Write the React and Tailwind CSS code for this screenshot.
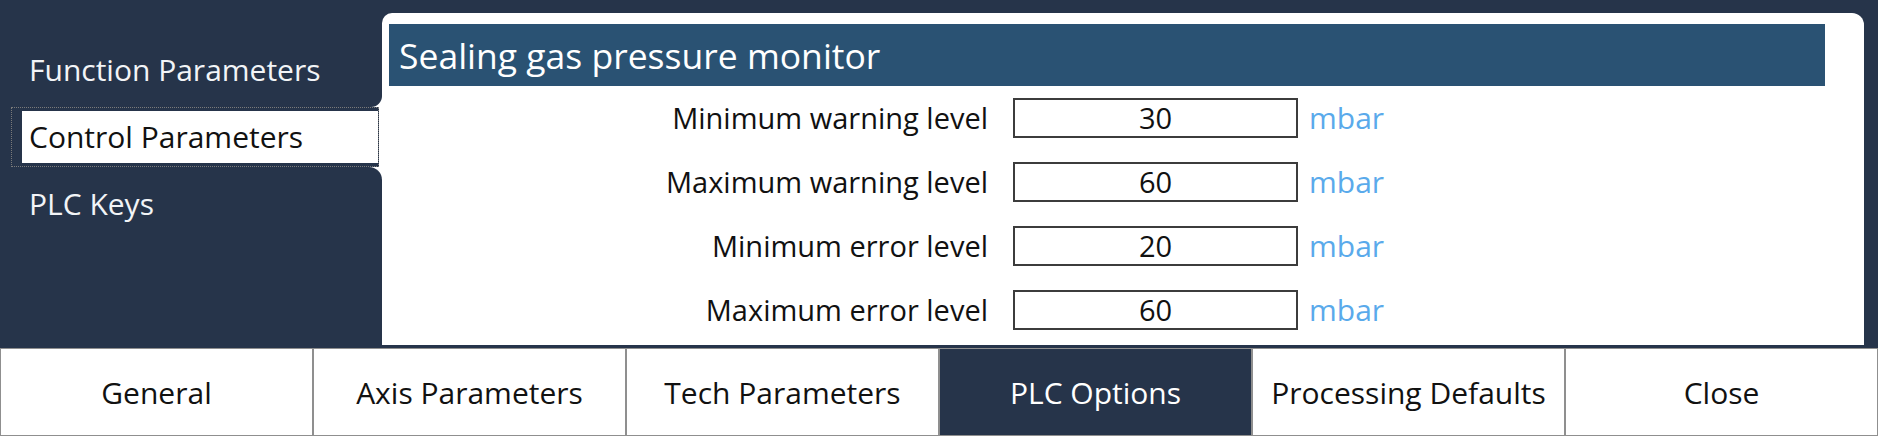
import { useState } from 'react';

const rows = [
    { label: 'Minimum warning level', value: '30' },
    { label: 'Maximum warning level', value: '60' },
    { label: 'Minimum error level', value: '20' },
    { label: 'Maximum error level', value: '60' },
];

const tabs = ['General', 'Axis Parameters', 'Tech Parameters', 'PLC Options', 'Processing Defaults', 'Close'];

export default function App() {
    const [values, setValues] = useState(rows.map(r => r.value));
    const activeTab = 'PLC Options';

    return (
        <div className="w-full h-[436px] bg-[#26344a] flex flex-col font-['Open_Sans',sans-serif] overflow-hidden">
            <div className="flex h-[348px]">
                {/* side menu */}
                <div className="w-[382px] bg-white flex flex-col">
                    <div className="h-[107px] bg-[#26344a] rounded-br-[11px] flex items-end pl-[29px] pb-[19px]">
                        <span className="text-[30px] leading-[36px] text-[#f2f4f7]">Function Parameters</span>
                    </div>
                    <div className="h-[60px] flex">
                        <div className="w-[11px] bg-[#26344a]" />
                        <div className="w-[368px] border border-dotted border-[#7a7a7a] bg-[#26344a] pl-[10px] py-[3px]">
                            <div className="h-full bg-white flex items-center pl-[7px]">
                                <span className="text-[30px] leading-[36px] text-[#111]">Control Parameters</span>
                            </div>
                        </div>
                    </div>
                    <div className="flex-1 bg-[#26344a] rounded-tr-[13px] pl-[29px] pt-[19px]">
                        <span className="text-[30px] leading-[36px] text-[#f2f4f7]">PLC Keys</span>
                    </div>
                </div>

                {/* content panel */}
                <div className="flex-1 bg-white mt-[13px] mb-[3px] mr-[14px] rounded-tl-[10px] rounded-tr-[12px] pl-[7px] pt-[11px] pr-[39px]">
                    <div className="h-[62px] bg-[#2a5273] flex items-center pl-[10px]">
                        <span className="text-[35.5px] leading-[44px] text-white">Sealing gas pressure monitor</span>
                    </div>
                    <div className="mt-[12px] flex flex-col gap-[24px]">
                        {rows.map((row, i) => (
                            <div key={row.label} className="flex items-center h-[40px]">
                                <div className="w-[599px] text-right text-[29px] leading-[36px] text-[#111]">{row.label}</div>
                                <input
                                    className="ml-[25px] w-[285px] h-[40px] border-2 border-[#3c3c3c] text-center text-[29px] text-[#111] outline-none font-['Open_Sans',sans-serif]"
                                    value={values[i]}
                                    onChange={(e) => setValues(values.map((v, j) => (j === i ? e.target.value : v)))}
                                />
                                <span className="ml-[11px] text-[30px] leading-[36px] text-[#5aaaeb]">mbar</span>
                            </div>
                        ))}
                    </div>
                </div>
            </div>

            {/* bottom buttons */}
            <div className="grid grid-cols-6 flex-1">
                {tabs.map(tab => (
                    <button
                        key={tab}
                        className={
                            tab === activeTab
                                ? 'border border-[#8f8f8f] bg-[#26344a] text-white text-[30px] flex items-center justify-center'
                                : 'border border-[#8f8f8f] bg-white text-[#111] text-[30px] flex items-center justify-center'
                        }
                    >
                        {tab}
                    </button>
                ))}
            </div>
        </div>
    );
}
